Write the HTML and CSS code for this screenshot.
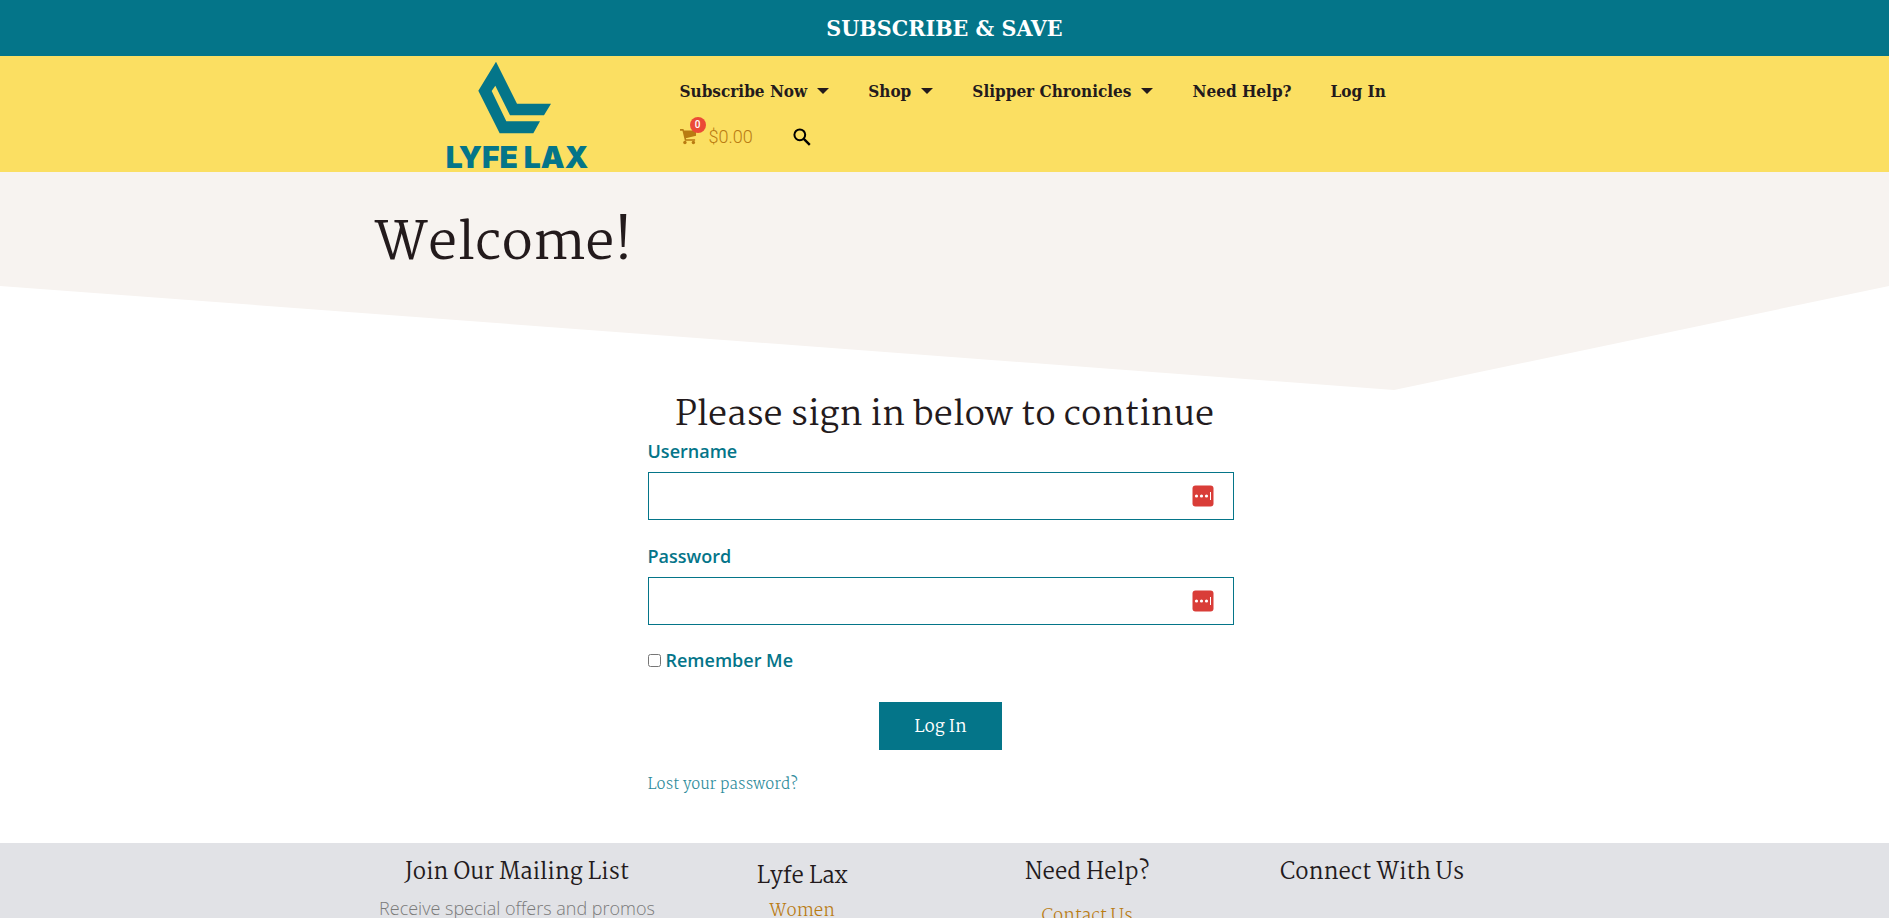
FILE: index.html
```
<!DOCTYPE html>
<html lang="en">
<head>
    <meta charset="utf-8">
    <meta name="viewport" content="width=device-width, initial-scale=1">
    <title>Log In - Lyfe Lax</title>
    <link rel="stylesheet" href="styles.css">
</head>
<body>
    <div class="topbar">SUBSCRIBE &amp; SAVE</div>

    <header class="header">
        <div class="container header-row">
            <a href="#" class="logo">
                <svg width="74" height="74" viewBox="175 62 222 222" fill="#047589" aria-hidden="true">
                    <path d="M229 64L292 190H394L373 225H271L227 136L216 152L260 243H361L341 279H240L176 151Z"/>
                </svg>
                <span>LYFE LAX</span>
            </a>
            <nav class="nav">
                <ul class="menu">
                    <li><a href="#">Subscribe Now <i class="caret"></i></a></li>
                    <li><a href="#">Shop <i class="caret"></i></a></li>
                    <li><a href="#">Slipper Chronicles <i class="caret"></i></a></li>
                    <li><a href="#">Need Help?</a></li>
                    <li><a href="#">Log In</a></li>
                </ul>
                <div class="tools">
                    <a href="#" class="cart">
                        <span class="cart-icon">
                            <svg width="17" height="16" viewBox="0 0 18 17" fill="#b97b12" aria-hidden="true">
                                <path d="M0 0h3.6l.6 1.6H17v5.6L6.2 9.7l.3 1.3H16v1.5H5.2L2.6 1.8H0Z"/>
                                <circle cx="5.2" cy="14.4" r="1.8"/>
                                <circle cx="14.2" cy="14.4" r="1.8"/>
                            </svg>
                            <span class="badge">0</span>
                        </span>
                        <span>$0.00</span>
                    </a>
                    <button type="button" class="search" aria-label="Search">
                        <svg width="18" height="18" viewBox="0 0 18 18" fill="none" stroke="#000" aria-hidden="true">
                            <circle cx="6.8" cy="6.8" r="5.4" stroke-width="2"/>
                            <path d="M10.8 10.8L16.8 16.8" stroke-width="2.4"/>
                        </svg>
                    </button>
                </div>
            </nav>
        </div>
    </header>

    <section class="hero">
        <div class="container">
            <h1>Welcome!</h1>
        </div>
        <svg class="hero-shape" viewBox="0 0 1000 100" preserveAspectRatio="none" aria-hidden="true">
            <path d="M0 0H1000L738 100Z" fill="#f7f3f0"/>
        </svg>
    </section>

    <main class="login">
        <h2>Please sign in below to continue</h2>
        <form class="login-form">
            <label for="user">Username</label>
            <div class="field">
                <input type="text" id="user">
                <svg class="key" width="22" height="22" viewBox="0 0 22 22" aria-hidden="true">
                    <rect x=".5" y=".5" width="21" height="21" rx="3" fill="#d93d38"/>
                    <g fill="#fff"><circle cx="4.5" cy="11" r="1.6"/><circle cx="9.5" cy="11" r="1.6"/><circle cx="14.5" cy="11" r="1.6"/><path d="M18 7h1v8h-1z"/></g>
                </svg>
            </div>
            <label for="pass">Password</label>
            <div class="field">
                <input type="password" id="pass">
                <svg class="key" width="22" height="22" viewBox="0 0 22 22" aria-hidden="true">
                    <rect x=".5" y=".5" width="21" height="21" rx="3" fill="#d93d38"/>
                    <g fill="#fff"><circle cx="4.5" cy="11" r="1.6"/><circle cx="9.5" cy="11" r="1.6"/><circle cx="14.5" cy="11" r="1.6"/><path d="M18 7h1v8h-1z"/></g>
                </svg>
            </div>
            <div class="remember">
                <input type="checkbox" id="remember">
                <label for="remember">Remember Me</label>
            </div>
            <button type="submit" class="btn">Log In</button>
            <a href="#" class="lost">Lost your password?</a>
        </form>
    </main>

    <footer class="footer">
        <div class="container footer-row">
            <div class="col">
                <h3>Join Our Mailing List</h3>
                <p>Receive special offers and promos</p>
            </div>
            <div class="col col-lax">
                <h3>Lyfe Lax</h3>
                <a href="#">Women</a>
            </div>
            <div class="col col-help">
                <h3>Need Help?</h3>
                <a href="#">Contact Us</a>
            </div>
            <div class="col">
                <h3>Connect With Us</h3>
            </div>
        </div>
    </footer>
</body>
</html>
```
FILE: styles.css
```
* { box-sizing: border-box; }
body { margin: 0; background: #fff; color: #231a1c; font-family: "Open Sans", sans-serif; font-size: 18px; }
h1, h2, h3, p, ul { margin: 0; padding: 0; }
h1, h2, h3 { font-family: Martel, "Liberation Serif", serif; font-weight: 400; }
a { text-decoration: none; }
.container { max-width: 1140px; margin: 0 auto; }

.topbar { background: #047589; color: #fff; text-align: center; font: bold 23px/56px "Roboto Slab", "DejaVu Serif Condensed", "DejaVu Serif", serif; }

.header { background: #fbdf62; }
.header-row { display: flex; height: 116px; }
.logo { width: 25%; display: flex; flex-direction: column; align-items: center; padding-top: 5px; color: #047589; font: 900 30px/44px Inter, sans-serif; }
.logo svg { display: block; flex-shrink: 0; margin-right: 4px; }
.nav { flex: 1; padding: 12px 20px; }
.menu { display: flex; gap: 39px; list-style: none; white-space: nowrap; }
.menu a { display: flex; align-items: center; gap: 10px; color: #231a1c; font: bold 17px/46px "Roboto Slab", "DejaVu Serif Condensed", "DejaVu Serif", serif; }
.caret { border: 6px solid transparent; border-top-color: #231a1c; border-bottom: 0; }
.tools { display: flex; align-items: center; gap: 40px; height: 46px; }
.cart { display: flex; align-items: center; gap: 12px; color: #b97b12; font: 300 18px/24px Roboto, sans-serif; }
.cart-icon { position: relative; display: flex; }
.badge { position: absolute; top: -12px; left: 10px; width: 16px; height: 16px; border-radius: 50%; background: #eb4a36; color: #fff; text-align: center; font: 500 10px/16px Roboto, sans-serif; }
.search { padding: 0; border: 0; background: none; display: flex; }

.hero { position: relative; background: #f7f3f0; height: 114px; padding-top: 36px; }
.hero h1 { font-size: 52px; line-height: 72px; }
.hero-shape { position: absolute; top: 100%; left: 0; width: 100%; height: 104px; }

.login { position: relative; padding: 110px 20px 45px; }
.login h2 { font-size: 34px; line-height: 40px; text-align: center; }
.login-form { width: 100%; max-width: 594px; margin: 0 auto; padding-right: 8px; }
.login-form label { display: block; color: #047589; font-weight: 600; line-height: 30px; }
.field { position: relative; margin: 6px 0 21px; }
.field input { display: block; width: 100%; height: 48px; padding: 0 50px 0 16px; border: 1px solid #047589; background: #fff; font: inherit; }
.key { position: absolute; top: 13px; right: 20px; }
.remember { display: flex; align-items: center; gap: 5px; }
.remember input { margin: 0; width: 13px; height: 13px; }
.login-form .remember label { line-height: 28px; }
.btn { display: block; margin: 28px auto 22px; width: 123px; height: 48px; padding: 2px 0 0; border: 0; background: #047589; color: #fff; font: 17px Martel, "Liberation Serif", serif; }
.lost { display: block; color: #2d8b9b; font: 300 15px/26px Martel, "Liberation Serif", serif; }

.footer { background: #e1e2e6; }
.footer-row { display: flex; padding-top: 14px; }
.col { width: 25%; text-align: center; }
.col h3 { font-size: 22px; line-height: 32px; }
.col p { color: #7a7a7a; font-weight: 300; line-height: 38px; white-space: nowrap; }
.col a { color: #b97b12; font: 300 17px/38px Martel, "Liberation Serif", serif; }
.col-lax { padding-top: 4px; }
.col-help a { line-height: 56px; }
```
